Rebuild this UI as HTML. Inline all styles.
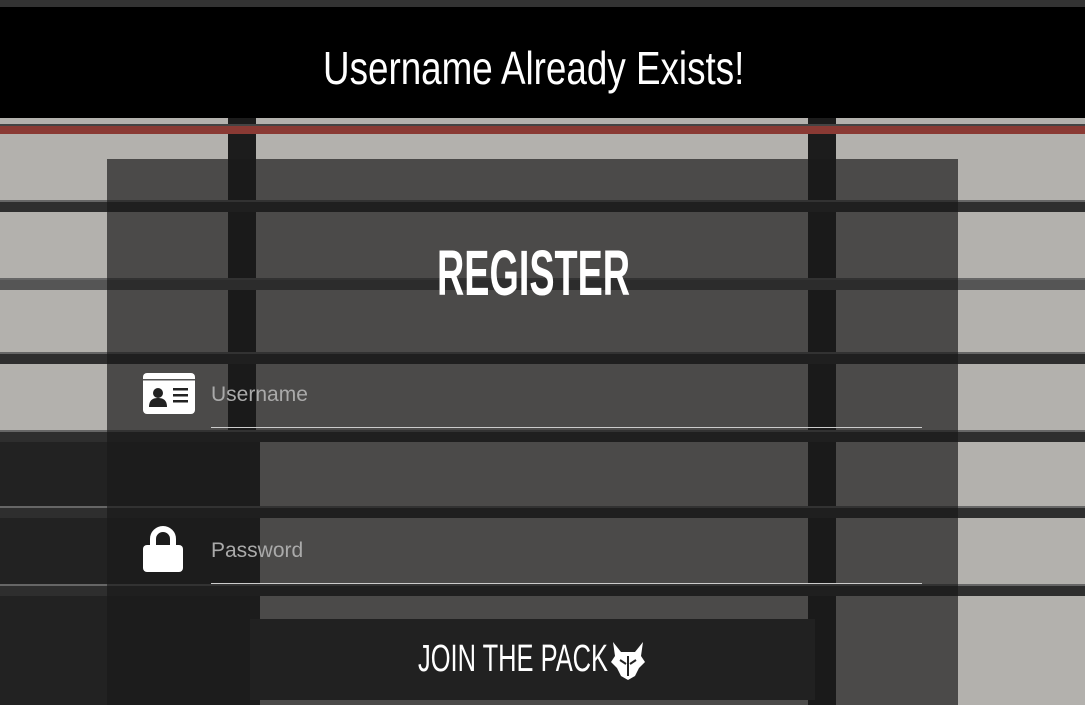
<!DOCTYPE html>
<html><head><style>
body{margin:0;width:1085px;height:705px;overflow:hidden;position:relative;background:#b3b1ad;font-family:"Liberation Sans",sans-serif}
.abs{position:absolute}
.bar{position:absolute;left:0;width:1085px;height:10px;background:#2e2e2e;border-top:2px solid #666}
.cond{font-family:"Liberation Sans Narrow","Liberation Sans",sans-serif;display:inline-block;transform-origin:left center;white-space:nowrap}
</style></head><body>
<div class="abs" style="left:0;top:0;width:1085px;height:7px;background:#333"></div>
<div class="abs" style="left:0;top:7px;width:1085px;height:111px;background:#000"></div>
<div class="abs" style="left:323px;top:38px;color:#fff;font-size:46px;line-height:60px"><span class="cond" style="transform:scaleX(.8)">Username Already Exists!</span></div>
<div class="abs" style="left:228px;top:118px;width:28px;height:587px;background:#1c1c1c"></div>
<div class="abs" style="left:808px;top:118px;width:28px;height:587px;background:#1c1c1c"></div>
<div class="abs" style="left:0;top:440px;width:260px;height:265px;background:#222"></div>
<div class="bar" style="top:124px;background:#8a3a34;height:8px;border-top-color:#444"></div>
<div class="bar" style="top:200px"></div>
<div class="bar" style="top:278px;background:#555"></div>
<div class="bar" style="top:352px"></div>
<div class="bar" style="top:430px"></div>
<div class="bar" style="top:506px"></div>
<div class="bar" style="top:584px"></div>
<div class="abs" style="left:107px;top:159px;width:851px;height:546px;background:rgba(25,25,25,.68)"></div>
<div class="abs" style="left:437px;top:235px;color:#fff;font-size:64px;font-weight:bold;line-height:76px"><span class="cond" style="transform:scaleX(.59)">REGISTER</span></div>
<svg class="abs" style="left:143px;top:373px" width="52" height="41" viewBox="0 0 52 41"><rect width="52" height="41" rx="4" fill="#fff"/><rect x="0" y="6" width="52" height="1.5" fill="#555"/><circle cx="15" cy="20" r="5" fill="#222"/><path d="M6 34c0-7 4-9 9-9s9 2 9 9z" fill="#222"/><rect x="30" y="15" width="15" height="2.5" fill="#222"/><rect x="30" y="21" width="15" height="2.5" fill="#222"/><rect x="30" y="27" width="15" height="2.5" fill="#222"/></svg>
<div class="abs" style="left:211px;top:383px;color:#aaa;font-size:21px">Username</div>
<div class="abs" style="left:211px;top:427px;width:711px;height:1px;background:#ccc"></div>
<svg class="abs" style="left:143px;top:526px" width="40" height="46" viewBox="0 0 40 46"><path d="M10 20v-7a10 10 0 0 1 20 0v7" stroke="#fff" stroke-width="6" fill="none"/><rect x="0" y="19" width="40" height="27" rx="4" fill="#fff"/></svg>
<div class="abs" style="left:211px;top:539px;color:#aaa;font-size:21px">Password</div>
<div class="abs" style="left:211px;top:583px;width:711px;height:1px;background:#ccc"></div>
<div class="abs" style="left:250px;top:619px;width:565px;height:81px;background:#212121"></div>
<div class="abs" style="left:418px;top:636px;color:#fff;font-size:38px;line-height:46px"><span class="cond" style="transform:scaleX(.67)">JOIN THE PACK</span></div>
<svg class="abs" style="left:611px;top:642px" width="34" height="38" viewBox="0 0 34 38"><path d="M2 0l8 10h14l8-10-2 14 4 6-6 6-4 8-7 4-7-4-4-8-6-6 4-6z" fill="#fff"/><path d="M17 14v20M9 18l6 4M25 18l-6 4" stroke="#222" stroke-width="2"/></svg>
</body></html>
